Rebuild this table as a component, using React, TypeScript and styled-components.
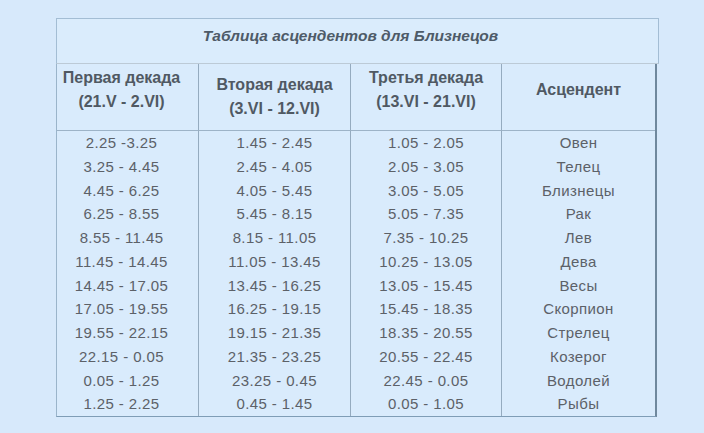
import styled, { createGlobalStyle } from 'styled-components';
import React from 'react';

const rows: string[][] = [
  ['2.25 -3.25', '1.45 - 2.45', '1.05 - 2.05', 'Овен'],
  ['3.25 - 4.45', '2.45 - 4.05', '2.05 - 3.05', 'Телец'],
  ['4.45 - 6.25', '4.05 - 5.45', '3.05 - 5.05', 'Близнецы'],
  ['6.25 - 8.55', '5.45 - 8.15', '5.05 - 7.35', 'Рак'],
  ['8.55 - 11.45', '8.15 - 11.05', '7.35 - 10.25', 'Лев'],
  ['11.45 - 14.45', '11.05 - 13.45', '10.25 - 13.05', 'Дева'],
  ['14.45 - 17.05', '13.45 - 16.25', '13.05 - 15.45', 'Весы'],
  ['17.05 - 19.55', '16.25 - 19.15', '15.45 - 18.35', 'Скорпион'],
  ['19.55 - 22.15', '19.15 - 21.35', '18.35 - 20.55', 'Стрелец'],
  ['22.15 - 0.05', '21.35 - 23.25', '20.55 - 22.45', 'Козерог'],
  ['0.05 - 1.25', '23.25 - 0.45', '22.45 - 0.05', 'Водолей'],
  ['1.25 - 2.25', '0.45 - 1.45', '0.05 - 1.05', 'Рыбы'],
];

const headers = [
  { lines: ['Первая декада', '(21.V - 2.VI)'], lift: true },
  { lines: ['Вторая декада', '(3.VI - 12.VI)'], lift: false },
  { lines: ['Третья декада', '(13.VI - 21.VI)'], lift: true },
  { lines: ['Асцендент'], lift: true },
];

const App = () => {
  return (
    <Page>
      <GlobalStyle />
      <Table>
        <Title>Таблица асцендентов для Близнецов</Title>
        <Grid>
          {headers.map((h, i) => (
            <HeadCell key={i} $lift={h.lift} $first={i === 0} $last={i === 3}>
              {h.lines.map((l) => (
                <span key={l}>{l}</span>
              ))}
            </HeadCell>
          ))}
          {rows.map((r, ri) =>
            r.map((v, ci) => (
              <Cell key={ri + '-' + ci} $first={ci === 0} $last={ci === 3}>
                {v}
              </Cell>
            ))
          )}
        </Grid>
      </Table>
    </Page>
  );
};

export default App;

const GlobalStyle = createGlobalStyle`
  html, body {
    margin: 0;
    padding: 0;
    background: #d7e9fb;
  }
  * {
    box-sizing: border-box;
  }
`;

const Page = styled.div`
  width: 704px;
  height: 433px;
  padding: 18px 0 0 56px;
  font-family: 'Liberation Sans', Arial, sans-serif;
`;

const Table = styled.div`
  width: 603px;
  display: flex;
  flex-direction: column;
`;

const Title = styled.div`
  height: 46px;
  border: 1px solid #a3bdd4;
  border-bottom-color: #bccad6;
  background: #daecfc;
  padding: 7px 14px 0 0;
  text-align: center;
  font-size: 15.5px;
  line-height: 20px;
  font-weight: bold;
  font-style: italic;
  color: #4e5b68;
`;

const Grid = styled.div`
  width: 601px;
  display: grid;
  grid-template-columns: 142px 152px 151px 1fr;
  border-left: 1px solid #9ab4ca;
  border-right: 2px solid #6f889d;
  border-bottom: 1px solid #7f9db6;
  background: #d9ebfc;
`;

const HeadCell = styled.div<{ $lift: boolean; $first: boolean; $last: boolean }>`
  height: 67px;
  display: flex;
  flex-direction: column;
  align-items: center;
  justify-content: center;
  padding-bottom: ${({ $lift }) => ($lift ? '15px' : '0')};
  padding-right: ${({ $first }) => ($first ? '12px' : '0')};
  border-bottom: 1px solid #9db3c7;
  border-right: ${({ $last }) => ($last ? 'none' : '1px solid #95abbf')};
  font-size: 16px;
  line-height: 24px;
  font-weight: bold;
  color: #505963;
`;

const Cell = styled.div<{ $first: boolean; $last: boolean }>`
  height: 23.75px;
  line-height: 23.75px;
  text-align: center;
  padding-right: ${({ $first }) => ($first ? '12px' : '0')};
  border-right: ${({ $last }) => ($last ? 'none' : '1px solid #95abbf')};
  font-size: 15px;
  letter-spacing: 0.4px;
  color: #5c6168;
  white-space: nowrap;
`;
